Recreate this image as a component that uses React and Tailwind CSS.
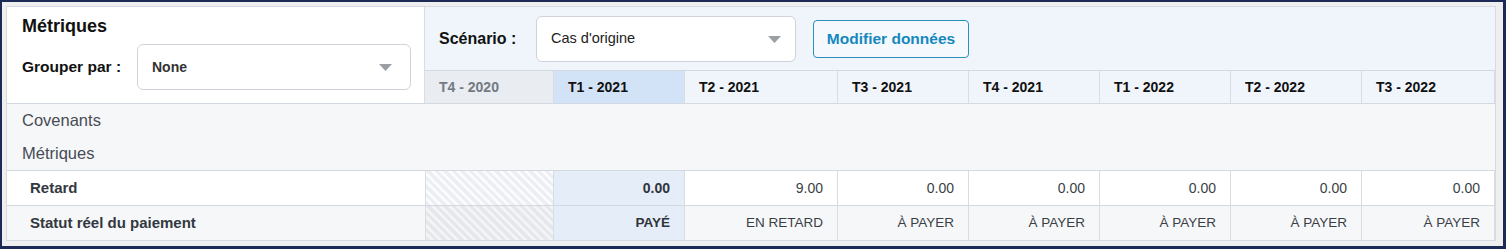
import React from 'react';

const columns = [
  { label: 'T4 - 2020', w: 'w-[129px]', past: true },
  { label: 'T1 - 2021', w: 'w-[131px]', current: true },
  { label: 'T2 - 2021', w: 'w-[153px]' },
  { label: 'T3 - 2021', w: 'w-[131px]' },
  { label: 'T4 - 2021', w: 'w-[131px]' },
  { label: 'T1 - 2022', w: 'w-[131px]' },
  { label: 'T2 - 2022', w: 'w-[131px]' },
  { label: 'T3 - 2022', w: 'w-[133px]' },
];

const retard = [null, '0.00', '9.00', '0.00', '0.00', '0.00', '0.00', '0.00'];
const statut = [null, 'PAYÉ', 'EN RETARD', 'À PAYER', 'À PAYER', 'À PAYER', 'À PAYER', 'À PAYER'];

const Caret = () => (
  <svg width="13" height="7" viewBox="0 0 13 7" className="shrink-0">
    <path d="M0 0 L13 0 L6.5 7 Z" fill="#9a9ea5" />
  </svg>
);

const Select = ({ value, className, textClass }) => (
  <div className={`flex items-center justify-between bg-white border border-[#cfd3d9] rounded-[6px] pl-[14px] ${className}`}>
    <span className={textClass}>{value}</span>
    <Caret />
  </div>
);

const DataRow = ({ label, values, bg, hatch, small }) => (
  <div className={`flex h-[35px] border-t border-[#d3d9e1] ${bg}`}>
    <div className="w-[418px] shrink-0 flex items-center pl-[23px] text-[15px] font-bold text-[#333840]">
      {label}
    </div>
    {values.map((v, i) => {
      const col = columns[i];
      if (col.past) {
        return <div key={i} className={`${col.w} shrink-0 border-l border-r border-[#d8dde4] ${hatch}`} />;
      }
      return (
        <div
          key={i}
          className={`${col.w} shrink-0 flex items-center justify-end pr-[14px] border-r border-[#d8dde4] ${
            col.current ? 'bg-[#e5edf9] font-bold text-[#2f343b]' : 'text-[#3a3f46]'
          } ${small ? 'text-[13.5px]' : 'text-[14px]'}`}
        >
          {v}
        </div>
      );
    })}
  </div>
);

export default function App() {
  return (
    <div
      className="w-[1506px] h-[249px] bg-[#efefef] border-l-2 border-t-2 border-r-[3px] border-b-[3px] border-[#1d2a55] pt-[4px] pl-[4px] pr-[7px] pb-[5px]"
      style={{ fontFamily: '"Liberation Sans", Arial, sans-serif' }}
    >
      <div className="h-full border border-[#d6dbe2] bg-[#f6f7f9] flex flex-col overflow-hidden">
        {/* header */}
        <div className="flex h-[97px] shrink-0 border-b border-[#d3d9e1]">
          <div className="w-[418px] shrink-0 bg-white border-r border-[#d8dde4] pl-[15px] pt-[8px]">
            <div className="text-[18px] font-bold text-[#111] leading-[22px]">Métriques</div>
            <div className="flex items-center mt-[7px]">
              <span className="text-[15.5px] font-bold text-[#111] w-[115px]">Grouper par :</span>
              <Select value="None" className="w-[274px] h-[46px] pr-[18px]" textClass="text-[14px] font-bold text-[#333]" />
            </div>
          </div>
          <div className="flex-1 bg-[#f0f5fc] flex flex-col">
            <div className="h-[63px] flex items-center pl-[14px] pt-[1px]">
              <span className="text-[16px] font-bold text-[#111] w-[97px]">Scénario :</span>
              <Select value="Cas d'origine" className="w-[260px] h-[46px] pr-[14px]" textClass="text-[14.5px] text-[#222]" />
              <button className="ml-[17px] h-[38px] w-[156px] border border-[#2b8fbd] rounded-[4px] bg-[#f5f9fd] text-[15.5px] font-bold text-[#1688bd]">
                Modifier données
              </button>
            </div>
            <div className="flex h-[33px] border-t border-[#d3d9e1]">
              {columns.map((c) => (
                <div
                  key={c.label}
                  className={`${c.w} shrink-0 flex items-center pl-[14px] text-[14px] font-bold border-r border-[#d8dde4] ${
                    c.past ? 'bg-[#e9ecf0] text-[#737a84]' : c.current ? 'bg-[#d3e3f7] text-[#111]' : 'text-[#111]'
                  }`}
                >
                  {c.label}
                </div>
              ))}
            </div>
          </div>
        </div>

        {/* sections */}
        <div className="h-[33px] flex items-center pl-[15px] text-[16.5px] text-[#474c55]">Covenants</div>
        <div className="h-[33px] flex items-center pl-[15px] text-[16.5px] text-[#474c55]">Métriques</div>

        <DataRow
          label="Retard"
          values={retard}
          bg="bg-white"
          hatch="bg-[repeating-linear-gradient(45deg,#eceef1_0px,#eceef1_3px,#fafbfc_3px,#fafbfc_6px)]"
        />
        <DataRow
          label="Statut réel du paiement"
          values={statut}
          bg="bg-[#f6f7f9]"
          small
          hatch="bg-[repeating-linear-gradient(45deg,#e5e7eb_0px,#e5e7eb_3px,#f3f4f6_3px,#f3f4f6_6px)]"
        />
      </div>
    </div>
  );
}
